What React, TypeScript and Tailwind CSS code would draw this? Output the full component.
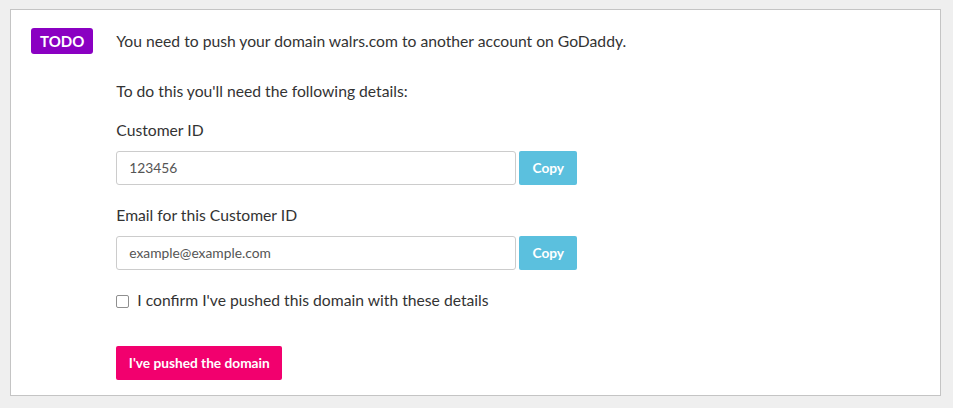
import React from 'react';

const CopyField = ({ value }: { value: string }) => (
  <div className="flex items-center gap-[3px]">
    <div className="flex h-[34px] w-[400px] items-center rounded-[3px] border border-[#cccccc] bg-white px-[12px] text-[13.8px] text-[#555555]">
      {value}
    </div>
    <button
      className="h-[34px] w-[58px] rounded-[2px] bg-[#5bc0de] text-[13.7px] font-bold text-white"
      type="button"
    >
      Copy
    </button>
  </div>
);

export default function App() {
  return (
    <div
      className="min-h-[408px] bg-[#efefef] pl-[10px] pr-[12px] pt-[9px] text-[#333333]"
      style={{ fontFamily: 'Lato, "Open Sans", sans-serif' }}
    >
      <div className="flex border border-[#c4c4c4] bg-white pb-[15px] pl-[20px] pt-[18px]">
        <div className="mr-[23px] h-[26px] rounded-[3px] bg-[#8a00c2] px-[9px] text-[15px] font-bold leading-[26px] text-white">
          TODO
        </div>
        <div className="flex flex-col text-[15.7px]">
          <p className="leading-[26px]">
            You need to push your domain walrs.com to another account on GoDaddy.
          </p>
          <p className="mt-[24px] leading-[26px]">
            To do this you'll need the following details:
          </p>
          <p className="mb-[8px] mt-[13px] leading-[26px]">Customer ID</p>
          <CopyField value="123456" />
          <p className="mb-[8px] mt-[17px] leading-[26px]">Email for this Customer ID</p>
          <CopyField value="example@example.com" />
          <label className="mt-[18px] flex h-[26px] items-center gap-[8px]">
            <span className="h-[13px] w-[13px] rounded-[2px] border border-[#8f8f8f] bg-white" />
            I confirm I've pushed this domain with these details
          </label>
          <div className="mt-[32px]">
            <button
              className="h-[34px] w-[166px] rounded-[2px] bg-[#f2006e] text-[13.7px] font-bold text-white"
              type="button"
            >
              I've pushed the domain
            </button>
          </div>
        </div>
      </div>
    </div>
  );
}
